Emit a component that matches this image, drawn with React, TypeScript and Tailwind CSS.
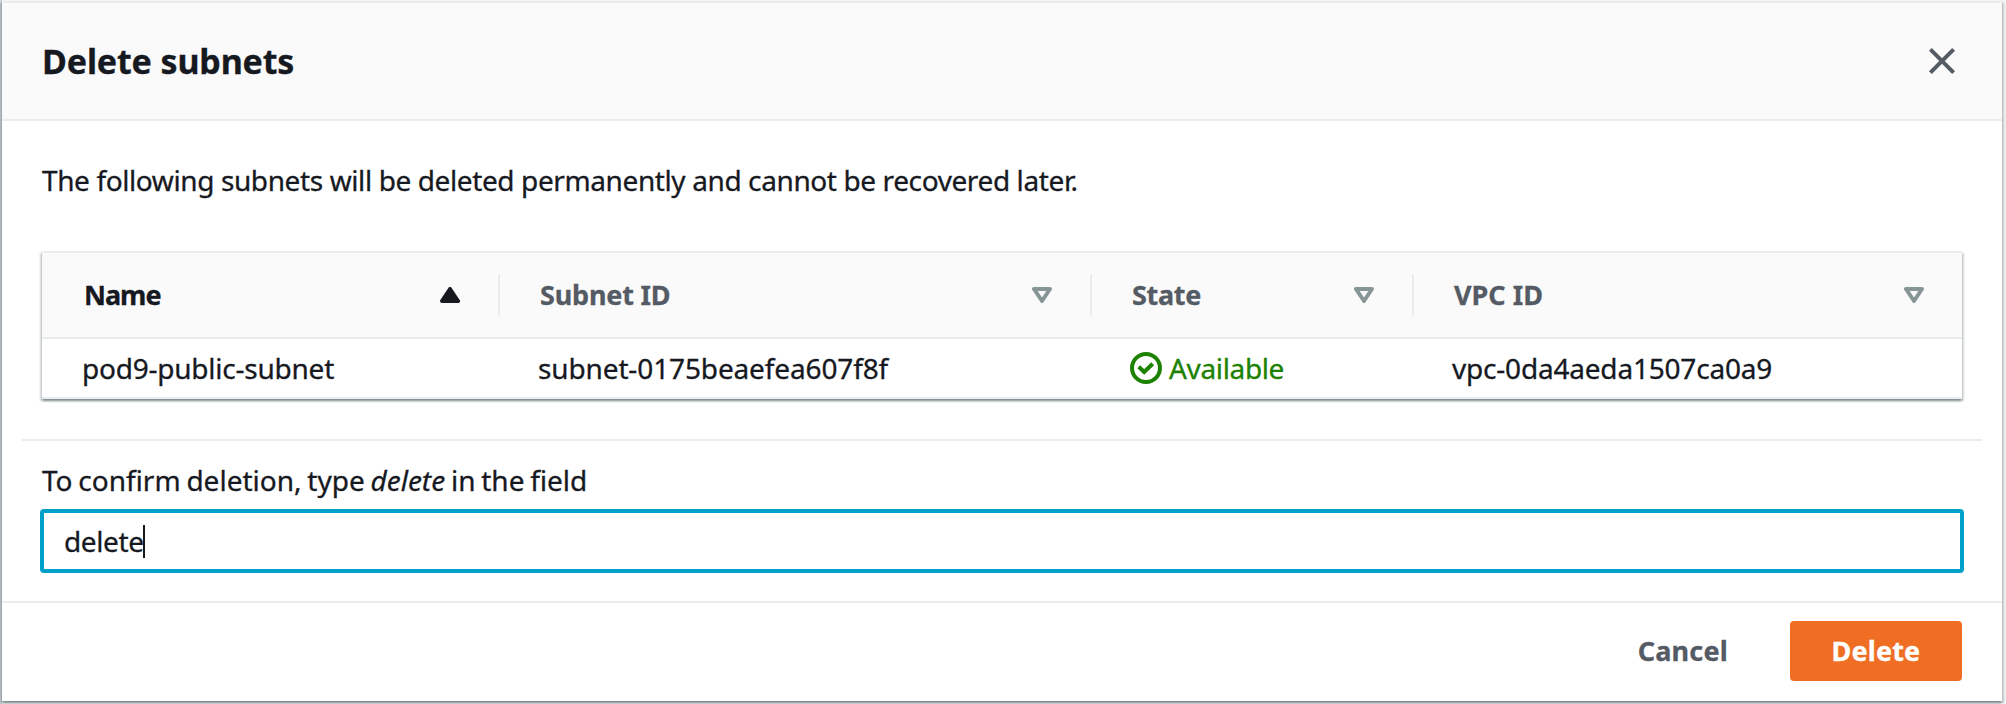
import type { ReactNode } from 'react';

function SortAscending() {
  return (
    <svg viewBox="0 0 20 16" className="h-4 w-5 shrink-0" aria-hidden="true">
      <path d="M10 2 18 14H2Z" fill="#16191f" stroke="#16191f" strokeWidth="4" strokeLinejoin="round" />
    </svg>
  );
}

function SortNone() {
  return (
    <svg viewBox="0 0 20 16" className="h-4 w-5 shrink-0" aria-hidden="true">
      <path d="M2 2H18L10 14Z" fill="none" stroke="#879596" strokeWidth="4" strokeLinejoin="round" />
    </svg>
  );
}

function StatusOk() {
  return (
    <svg viewBox="0 0 32 32" className="size-8 shrink-0" fill="none" stroke="#1d8102" strokeWidth="4" aria-hidden="true">
      <circle cx="16" cy="16" r="14" />
      <path d="M8.7 14.7 14.2 20 22.7 11.7" />
    </svg>
  );
}

function CloseIcon() {
  return (
    <svg viewBox="0 0 28 28" className="size-7" fill="none" stroke="#545b64" strokeWidth="4" aria-hidden="true">
      <path d="M2.4 2.4 25.6 25.6M25.6 2.4 2.4 25.6" />
    </svg>
  );
}

function HeaderCell({ children, active, last, className }: { children: ReactNode; active?: boolean; last?: boolean; className: string }) {
  return (
    <div className={`flex items-center justify-between text-[27px] font-bold ${active ? 'text-[#16191f]' : 'text-[#545b64]'} ${last ? '' : 'h-[42px] border-r-2 border-[#eaeded]'} pr-[38px] ${className}`}>
      <span>{children}</span>
      {active ? <SortAscending /> : <SortNone />}
    </div>
  );
}

export default function App() {
  return (
    <div className="flex h-[704px] w-[2006px] overflow-hidden bg-[linear-gradient(90deg,#cbd1d5_2px,#f2f3f3_2px)] pt-px pr-1 pb-[3px] pl-0.5 font-['Noto_Sans','Liberation_Sans',sans-serif] text-[28px] leading-[44px] text-[#16191f] [-webkit-text-stroke:0.3px_currentColor]">
      <section className="flex flex-1 flex-col border-t-2 border-[#eaeded] bg-white shadow-[0_2px_2px_0_rgba(0,28,36,0.3),2px_2px_2px_0_rgba(0,28,36,0.15),-2px_2px_2px_0_rgba(0,28,36,0.15)]">
        <header className="flex h-[118px] items-center justify-between border-b-2 border-[#eaeded] bg-[#fafafa] pr-[46px] pl-10">
          <h2 className="text-[34px] font-bold tracking-[-0.15px]">Delete subnets</h2>
          <button type="button" aria-label="Close"><CloseIcon /></button>
        </header>

        <div className="flex h-[480px] flex-col px-5 pt-[37px]">
          <p className="px-5 tracking-[-0.39px]">The following subnets will be deleted permanently and cannot be recovered later.</p>

          <div className="mx-5 mt-[49px] border-t-2 border-[#eaeded] shadow-[0_2px_2px_0_rgba(0,28,36,0.3),2px_2px_2px_0_rgba(0,28,36,0.15),-2px_2px_2px_0_rgba(0,28,36,0.15)]">
            <div className="grid h-[86px] grid-cols-[458px_592px_322px_1fr] items-center border-b-2 border-[#eaeded] bg-[#fafafa]">
              <HeaderCell active className="pl-[42px] tracking-[-1px]">Name</HeaderCell>
              <HeaderCell className="pl-10 tracking-[-0.2px]">Subnet ID</HeaderCell>
              <HeaderCell className="pl-10 tracking-[-0.3px]">State</HeaderCell>
              <HeaderCell last className="pl-10">VPC ID</HeaderCell>
            </div>
            <div className="grid h-[60px] grid-cols-[458px_592px_322px_1fr] items-center border-b-2 border-[#eaeded] bg-white">
              <span className="pl-10 tracking-[-0.23px]">pod9-public-subnet</span>
              <span className="pl-[38px] tracking-[-0.13px]">subnet-0175beaefea607f8f</span>
              <span className="flex items-center gap-[7px] pl-[38px] tracking-[-0.35px] text-[#1d8102]">
                <StatusOk />
                Available
              </span>
              <span className="pl-[38px] tracking-[-0.2px]">vpc-0da4aeda1507ca0a9</span>
            </div>
          </div>

          <div className="mt-10 flex flex-col border-t-2 border-[#eaeded] px-[18px] pt-[17px]">
            <label className="pl-0.5 [word-spacing:-1.5px]">To confirm deletion, type <i>delete</i> in the field</label>
            <div className="mt-[7px] flex h-16 items-center rounded-[4px] border-4 border-[#00a1c9] pl-5">
              <span className="tracking-[-0.4px]">delete</span>
              <span className="-ml-px h-[33px] w-0.5 bg-[#16191f]" />
            </div>
          </div>
        </div>

        <footer className="flex flex-1 items-center justify-end gap-[62px] border-t-2 border-[#eaeded] pr-10 pb-0.5 text-[27px] font-bold">
          <button type="button" className="tracking-[0.2px] text-[#545b64]">Cancel</button>
          <button type="button" className="h-[60px] w-[172px] rounded-[4px] bg-[#f06d24] tracking-[0.15px] text-white">Delete</button>
        </footer>
      </section>
    </div>
  );
}
